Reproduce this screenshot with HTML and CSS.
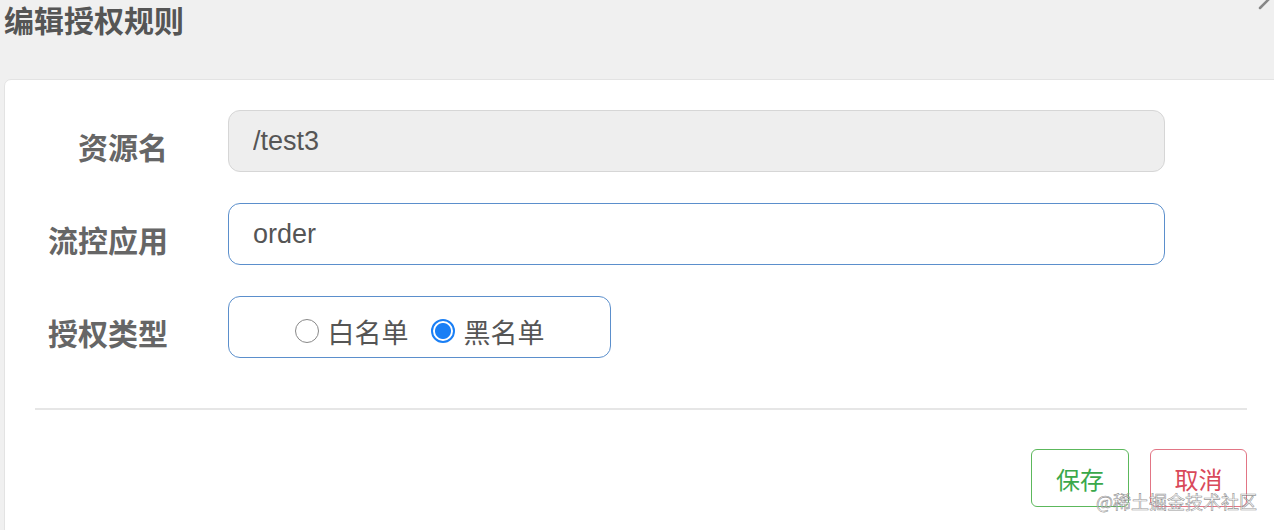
FILE: index.html
```html
<!DOCTYPE html>
<html>

<head>
  <title>编辑授权规则</title>
  <meta name="viewport" content="width=device-width, initial-scale=1">
  <link rel="stylesheet" href="styles.css">
</head>

<body>

  <div class="dialog-head">
    <h2 class="title">编辑授权规则</h2>
    <svg class="close-mark" width="14" height="10" viewBox="0 0 14 10">
      <path d="M2 8 L12 -2" stroke="#888" stroke-width="2.5" stroke-linecap="round" />
    </svg>
  </div>

  <div class="panel">
    <form class="rule-form">
      <div class="row">
        <label class="label">资源名</label>
        <input class="field field-disabled" type="text" value="/test3" disabled>
      </div>
      <div class="row">
        <label class="label">流控应用</label>
        <input class="field" type="text" value="order">
      </div>
      <div class="row">
        <label class="label">授权类型</label>
        <div class="radio-box">
          <label class="radio"><input type="radio" name="strategy"> 白名单</label>
          <label class="radio"><input type="radio" name="strategy" checked> 黑名单</label>
        </div>
      </div>
    </form>

    <hr class="divider">

    <div class="actions">
      <span class="btn btn-save">保存</span>
      <span class="btn btn-cancel">取消</span>
    </div>

    <span class="watermark">@稀土掘金技术社区</span>
  </div>

</body>

</html>
```

FILE: styles.css
```css
body {
  margin: 0;
  background: #f0f0f0;
  font-family: "Liberation Sans", "Noto Sans CJK SC", sans-serif;
  overflow: hidden;
}

* {
  box-sizing: border-box;
}

/* Dialog title bar */
.dialog-head {
  position: relative;
  height: 79px;
  padding-top: 1px;
}

.title {
  margin: 0;
  padding: 0 0 0 4px;
  font-family: "Noto Sans CJK SC", sans-serif;
  font-size: 30px;
  line-height: 36px;
  font-weight: bold;
  color: #555;
}

.close-mark {
  position: absolute;
  top: 0;
  right: 2px;
}

/* White content area */
.panel {
  position: relative;
  margin-left: 4px;
  margin-right: -2px;
  height: 460px;
  background: #fff;
  border: 1px solid #e3e3e3;
  border-radius: 7px 0 0 0;
  padding-top: 30px;
}

.rule-form {
  display: flex;
  flex-direction: column;
  gap: 31px;
}

.row {
  display: flex;
  align-items: center;
  height: 62px;
}

.label {
  width: 163px;
  margin-right: 60px;
  padding-top: 10px;
  text-align: right;
  font-family: "Noto Sans CJK SC", sans-serif;
  font-size: 30px;
  font-weight: bold;
  color: #666;
}

.field {
  width: 937px;
  height: 62px;
  margin: 0;
  padding: 0 24px;
  border: 1px solid #5b8fcc;
  border-radius: 12px;
  background: #fff;
  font-family: "Liberation Sans", sans-serif;
  font-size: 27px;
  color: #555;
  outline: none;
}

.field-disabled {
  background: #eee;
  border-color: #d6d6d6;
  color: #555;
  -webkit-text-fill-color: #555;
}

/* Radio group */
.radio-box {
  display: flex;
  justify-content: center;
  align-items: center;
  gap: 22px;
  width: 383px;
  height: 62px;
  padding-top: 8px;
  border: 1px solid #5b8fcc;
  border-radius: 12px;
}

.radio {
  display: flex;
  align-items: center;
  gap: 9px;
  font-family: "Noto Sans CJK SC", sans-serif;
  font-size: 27px;
  color: #555;
}

.radio input {
  appearance: none;
  -webkit-appearance: none;
  margin: 0;
  width: 24px;
  height: 24px;
  border: 1.5px solid #888;
  border-radius: 50%;
  background: #fff;
}

.radio input:checked {
  border: 2px solid #1a7ff5;
  background: radial-gradient(circle, #1a7ff5 0 7.5px, #fff 8.5px);
}

/* Separator line */
.divider {
  margin: 50px 28px 0 30px;
  border: none;
  border-top: 2px solid #e6e6e6;
}

/* Buttons */
.actions {
  display: flex;
  justify-content: flex-end;
  gap: 21px;
  margin: 39px 28px 0 0;
}

.btn {
  display: flex;
  justify-content: center;
  align-items: center;
  width: 98px;
  height: 58px;
  border: 1px solid;
  border-radius: 6px;
  background: #fff;
  font-family: "Noto Sans CJK SC", sans-serif;
  font-size: 24px;
  cursor: pointer;
}

.btn-save {
  border-color: #5cb85c;
  color: #3aa84a;
}

.btn-cancel {
  width: 97px;
  border-color: #e27585;
  color: #d9495a;
}

/* Site watermark over the buttons */
.watermark {
  position: absolute;
  left: 1091px;
  top: 408px;
  font-family: "Noto Sans CJK SC", sans-serif;
  font-size: 18px;
  color: rgba(255, 255, 255, 0.6);
  -webkit-text-stroke: 0.6px rgba(110, 110, 110, 0.75);
}
```
